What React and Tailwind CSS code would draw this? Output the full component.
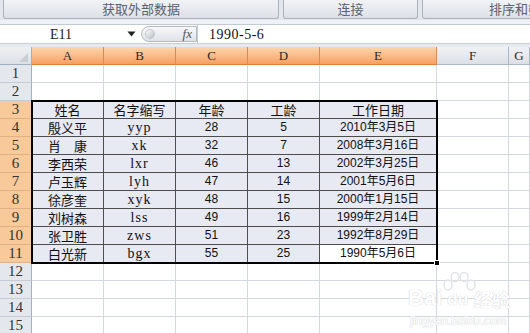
import React from "react";

const CJK = "font-['Noto_Sans_CJK_SC',sans-serif]";
const SERIF = "font-['Liberation_Serif','Noto_Sans_CJK_SC',serif]";

const columns = [
  { key: "A", w: "w-[72px]", sel: true },
  { key: "B", w: "w-[72px]", sel: true },
  { key: "C", w: "w-[72px]", sel: true },
  { key: "D", w: "w-[72px]", sel: true },
  { key: "E", w: "w-[117px]", sel: true },
  { key: "F", w: "w-[72px]", sel: false },
  { key: "G", w: "flex-1", sel: false },
];

const table = [
  ["姓名", "名字缩写", "年龄", "工龄", "工作日期"],
  ["殷义平", "yyp", "28", "5", "2010年3月5日"],
  ["肖　康", "xk", "32", "7", "2008年3月16日"],
  ["李西荣", "lxr", "46", "13", "2002年3月25日"],
  ["卢玉辉", "lyh", "47", "14", "2001年5月6日"],
  ["徐彦奎", "xyk", "48", "15", "2000年1月15日"],
  ["刘树森", "lss", "49", "16", "1999年2月14日"],
  ["张卫胜", "zws", "51", "23", "1992年8月29日"],
  ["白光新", "bgx", "55", "25", "1990年5月6日"],
];

function Ribbon() {
  const btn =
    "h-[19px] shrink-0 flex items-center justify-center border border-t-0 border-[#aab2bc] rounded-b-[3px] bg-gradient-to-b from-[#f1f3f6] to-[#dde1e7] text-[13px] text-[#5b626c] whitespace-nowrap " +
    CJK;
  return (
    <div className="h-[20px] bg-[#e3e7ec] flex gap-[4px] pl-[3px] overflow-hidden">
      <div className={btn + " w-[276px]"}>获取外部数据</div>
      <div className={btn + " w-[135px]"}>连接</div>
      <div className={btn + " w-[200px] justify-start pl-[66px]"}>排序和筛选</div>
    </div>
  );
}

function FormulaBar() {
  return (
    <>
      <div className="h-[5px] bg-[#eef1f5] border-b border-[#c4cad2]" />
      <div className="h-[19px] bg-white flex items-center border-b border-[#c9cfd7]">
        <div className={"w-[118px] text-center text-[14px] text-[#222] pl-[4px] " + SERIF}>E11</div>
        <svg width="9" height="6" viewBox="0 0 9 6" className="ml-[9px]">
          <path d="M0.5 0.5 H8.5 L4.5 5.5 Z" fill="#222" />
        </svg>
        <div className="ml-[5px] w-[56px] h-[16px] rounded-l-full border border-[#b4bac2] bg-gradient-to-b from-[#f7f8fa] to-[#dfe3e8] flex items-center justify-end pr-[4px] relative">
          <div className="absolute left-[3px] top-[2px] w-[10px] h-[10px] rounded-full bg-gradient-to-br from-[#ffffff] to-[#b9bec6] border border-[#c2c7ce]" />
          <span className="italic text-[13px] text-[#555] font-['Liberation_Serif',serif]">fx</span>
        </div>
        <div className="w-px h-[19px] bg-[#c4cad2]" />
        <div className={"ml-[11px] text-[14px] tracking-[0.5px] text-[#111] " + SERIF}>1990-5-6</div>
      </div>
      <div className="h-[3px] bg-[#e6eaef]" />
    </>
  );
}

function HeaderRow() {
  return (
    <div className="flex h-[18px]">
      <div className="w-[32px] shrink-0 bg-gradient-to-b from-[#eef0f3] to-[#dde1e6] border-r border-b border-[#9eb0c3] relative">
        <svg width="9" height="9" viewBox="0 0 9 9" className="absolute right-[3px] bottom-[2px]">
          <path d="M9 0 V9 H0 Z" fill="#c9ced5" />
        </svg>
      </div>
      {columns.map((c) => (
        <div
          key={c.key}
          className={
            c.w +
            " shrink-0 flex items-center justify-center text-[13px] border-r border-b " +
            SERIF +
            (c.sel
              ? " bg-gradient-to-b from-[#fcd7ad] to-[#f6a062] border-r-[#d88d54] border-b-[#e07f30] text-[#2a2a2a]"
              : " bg-gradient-to-b from-[#f0f2f5] to-[#dce0e6] border-[#a9b8c8] text-[#2a2a2a]")
          }
        >
          {c.key}
        </div>
      ))}
    </div>
  );
}

function cellFont(ci, ri) {
  if (ri === 0 || ci === 0) return CJK + " text-[13px]";
  if (ci === 1) return SERIF + " text-[14px] tracking-[1px]";
  return "font-['Liberation_Sans','Noto_Sans_CJK_SC',sans-serif] text-[12px]";
}

function Row({ n }) {
  const inTable = n >= 3 && n <= 11;
  const data = inTable ? table[n - 3] : null;
  return (
    <div className="flex h-[18px]">
      <div
        className={
          "w-[32px] shrink-0 flex items-center justify-center text-[15px] text-[#333] border-r border-b " +
          SERIF +
          (inTable
            ? " bg-[#f8ca9a] border-r-[#d88d54] border-b-[#e0b184]"
            : " bg-[#e4e8ed] border-r-[#9eb0c3] border-b-[#c3ccd7]")
        }
      >
        {n}
      </div>
      {columns.map((c, ci) => {
        const tableCell = inTable && ci < 5;
        const isActive = n === 11 && ci === 4;
        return (
          <div
            key={c.key}
            className={
              c.w +
              " shrink-0 flex items-center justify-center leading-[17px] text-[#111] border-r border-b " +
              (tableCell
                ? (isActive ? "bg-white" : "bg-[#e7e9f3]") + " border-[#4d4d4d] " + cellFont(ci, n - 3)
                : "bg-white border-[#d3d8df]")
            }
          >
            {tableCell ? data[ci] : null}
          </div>
        );
      })}
    </div>
  );
}

function Watermark() {
  const halo = " text-white [text-shadow:0_0_1px_#cfd2d6,0_0_1px_#cfd2d6]";
  return (
    <div className="absolute left-[405px] top-[272px] w-[120px] h-[58px] pointer-events-none select-none">
      <svg width="40" height="22" viewBox="0 0 40 22" className="absolute left-[34px] top-0">
        <g fill="none" stroke="#e2e4e7" strokeWidth="1.5">
          <ellipse cx="9" cy="13" rx="4" ry="5" />
          <ellipse cx="16" cy="5" rx="4" ry="4.5" />
          <ellipse cx="25" cy="5" rx="4" ry="4.5" />
          <ellipse cx="32" cy="13" rx="4" ry="5" />
        </g>
      </svg>
      <div className={"absolute left-[3px] top-[14px] flex items-end gap-[2px] font-['Liberation_Sans',sans-serif] font-bold" + halo}>
        <span className="text-[22px] leading-[24px]">Bai</span>
        <span className="text-[17px] leading-[20px] ml-[3px]">du</span>
        <span className={"text-[18px] leading-[22px] ml-[4px] " + CJK}>经验</span>
      </div>
      <div className={"absolute left-[5px] top-[40px] text-[12px] font-['Liberation_Sans',sans-serif]" + halo}>
        jingyan.baidu.com
      </div>
    </div>
  );
}

function Sheet() {
  const rows = Array.from({ length: 15 }, (_, i) => i + 1);
  return (
    <div className="relative">
      <HeaderRow />
      {rows.map((n) => (
        <Row key={n} n={n} />
      ))}
      {/* selection outline around A3:E11 */}
      <div className="absolute left-[31px] top-[53px] w-[407px] h-[164px] border-2 border-black pointer-events-none" />
      <div className="absolute left-[434px] top-[213px] w-[6px] h-[6px] bg-black border border-white pointer-events-none" />
    </div>
  );
}

export default function App() {
  return (
    <div className="w-[530px] h-[333px] overflow-hidden bg-white relative">
      <Ribbon />
      <FormulaBar />
      <Sheet />
      <Watermark />
    </div>
  );
}
